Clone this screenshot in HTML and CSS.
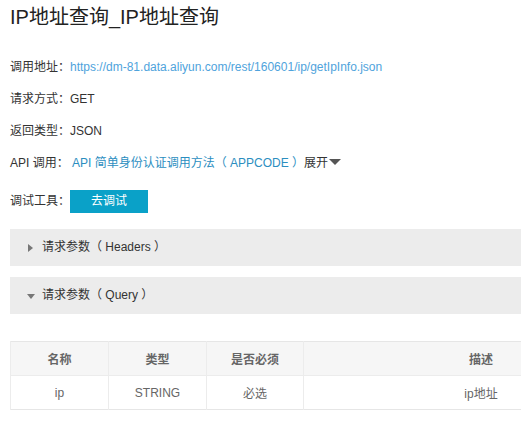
FILE: index.html
```html
<!DOCTYPE html>
<html lang="zh-CN">
<head>
  <meta charset="UTF-8">
  <meta name="viewport" content="width=device-width, initial-scale=1.0">
  <title>IP地址查询_IP地址查询</title>
  <link rel="stylesheet" href="styles.css">
</head>
<body>
  <div class="page">
    <h1>IP地址查询_IP地址查询</h1>

    <div class="info">
      <p>调用地址：<a class="url" href="#">https://dm-81.data.aliyun.com/rest/160601/ip/getIpInfo.json</a></p>
      <p>请求方式：GET</p>
      <p>返回类型：JSON</p>
      <p>API 调用： <a class="api" href="#">API 简单身份认证调用方法（ APPCODE ）</a>展开<span class="caret"></span></p>
      <p class="tool">调试工具：<button class="debug">去调试</button></p>
    </div>

    <div class="panel"><span class="arrow right"></span>请求参数（ Headers ）</div>
    <div class="panel"><span class="arrow down"></span>请求参数（ Query ）</div>

    <table class="params">
      <thead>
        <tr><th class="c1">名称</th><th class="c2">类型</th><th class="c3">是否必须</th><th>描述</th></tr>
      </thead>
      <tbody>
        <tr><td>ip</td><td>STRING</td><td>必选</td><td>ip地址</td></tr>
      </tbody>
    </table>
  </div>
</body>
</html>
```

FILE: styles.css
```css
html, body { margin: 0; overflow: hidden; background: #fff; }
body { font-family: "Liberation Sans", Arial, "Noto Sans CJK SC", sans-serif; color: #333; font-size: 12px; font-feature-settings: "chws" 0, "halt" 0; }
.page { width: 649px; padding-left: 10px; }
h1 { font-size: 20px; line-height: 28px; font-weight: normal; margin: 3px 0 0; color: #222; }
.info { margin-top: 26px; }
.info p { margin: 0 0 12px; line-height: 20px; }
.info a { text-decoration: none; }
.url { color: #4fa3dc; }
.api { color: #2b8ebf; }
.caret { display: inline-block; width: 0; height: 0; border-left: 6px solid transparent; border-right: 6px solid transparent; border-top: 6px solid #555; margin-left: 1px; vertical-align: 2px; }
.info p.tool { margin-top: 17px; display: flex; align-items: center; line-height: 23px; }
.debug { width: 78px; height: 23px; border: none; background: #0aa1c8; color: #fff; font: inherit; font-size: 12px; padding: 0; cursor: pointer; }
.panel { height: 37px; line-height: 37px; background: #ececec; margin-top: 16px; padding-left: 32px; position: relative; }
.panel + .panel { margin-top: 11px; }
.arrow { position: absolute; left: 18px; top: 15px; width: 0; height: 0; }
.arrow.right { border-top: 4px solid transparent; border-bottom: 4px solid transparent; border-left: 5px solid #777; }
.arrow.down { top: 17px; left: 17px; border-left: 4px solid transparent; border-right: 4px solid transparent; border-top: 5px solid #777; }
.params { width: 100%; border-collapse: collapse; margin-top: 27px; border: 1px solid #e6e6e6; }
.params th, .params td { height: 33px; padding: 0; text-align: center; border-left: 1px solid #ececec; }
.params th { background: #f6f6f6; color: #666; font-weight: bold; }
.params td { color: #666; border-top: 1px solid #ececec; }
.c1, .c2 { width: 97px; }
.c3 { width: 96px; }
```
